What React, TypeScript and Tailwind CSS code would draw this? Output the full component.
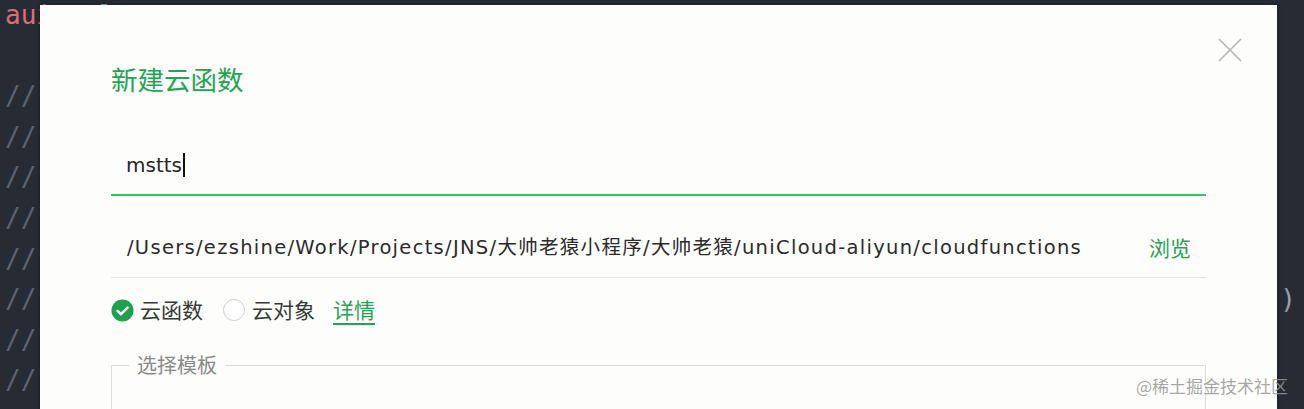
import React from "react";

const CN = "font-['Noto_Sans_CJK_SC',sans-serif]";
const MIX = "font-['DejaVu_Sans','Noto_Sans_CJK_SC',sans-serif]";

// 背景の編集器の行 (大半はダイアログの下に隠れる)
function EditorLines() {
  const lines: React.ReactNode[] = [
    <>
      <span className="text-[#e06c75]">aui</span>
      <span className="text-[#61afef]">   l</span>
    </>,
    <>&nbsp;</>,
  ];
  for (let i = 0; i < 8; i++) {
    lines.push(
      <span className="flex w-full justify-between text-[#5c6370]">
        <span>//</span>
        {i === 5 && <span className="pr-[8px] text-[#9aa0aa]">-)</span>}
      </span>
    );
  }
  return (
    <div className="mt-[-5px] pl-[5px] font-['DejaVu_Sans_Mono',monospace] text-[26px] leading-[40.6px] whitespace-pre">
      {lines.map((l, i) => (
        <div key={i} className="flex">
          {l}
        </div>
      ))}
    </div>
  );
}

function CheckedRadio() {
  return (
    <svg width="23" height="23" viewBox="0 0 24 24" className="shrink-0">
      <circle cx="12" cy="12" r="11.5" fill="#1ea04f" />
      <path
        d="M6.8 12.4l3.6 3.5 6.9-7"
        fill="none"
        stroke="#fff"
        strokeWidth="2.6"
        strokeLinecap="round"
        strokeLinejoin="round"
      />
    </svg>
  );
}

function EmptyRadio() {
  return (
    <span className="block size-[22px] shrink-0 rounded-full border-[1.5px] border-[#cfcfcf] bg-white" />
  );
}

export default function App() {
  return (
    <div className="relative h-[409px] w-[1304px] overflow-hidden bg-[#272b34]">
      <EditorLines />

      <div className="absolute top-[5px] left-[40px] h-[420px] w-[1237px] bg-[#fdfdfb] px-[71px] pt-[56px] shadow-[0_0_4px_rgba(0,0,0,0.4)]">
        <svg
          width="24"
          height="24"
          viewBox="0 0 24 24"
          className="absolute top-[33px] right-[35px]"
        >
          <path d="M1 1L23 23M23 1L1 23" stroke="#b5b5b5" strokeWidth="1.6" />
        </svg>

        <h2 className={`${CN} text-[26.5px] leading-[36px] text-[#1fa553]`}>新建云函数</h2>

        <div className={`${MIX} mt-[39px] flex h-[60px] items-center border-b-2 border-[#36c55d] pl-[15px] text-[20px] text-[#262626]`}>
          mstts
          <span className="ml-[1px] inline-block h-[24px] w-[2px] bg-[#111]" />
        </div>

        <div className="mt-[22px] flex h-[60px] items-center justify-between border-b border-[#e4e4e2] pr-[15px] pl-[16px]">
          <span className={`${MIX} text-[19.5px] tracking-[1.3px] text-[#2b2b2b]`}>
            /Users/ezshine/Work/Projects/JNS/大帅老猿小程序/大帅老猿/uniCloud-aliyun/cloudfunctions
          </span>
          <span className={`${CN} text-[21px] text-[#1fa553]`}>浏览</span>
        </div>

        <div className={`${CN} mt-[20px] flex h-[24px] items-center text-[21px] text-[#333a35]`}>
          <CheckedRadio />
          <span className="ml-[6px]">云函数</span>
          <span className="ml-[20px]">
            <EmptyRadio />
          </span>
          <span className="ml-[7px]">云对象</span>
          <span className="ml-[18px] text-[#1fa553] underline decoration-[1.5px] underline-offset-[5px]">
            详情
          </span>
        </div>

        <fieldset className="mt-[29px] h-[120px] border border-[#dcdcdc]">
          <legend className={`${CN} ml-[17px] px-[8px] text-[20px] leading-[28px] text-[#8a8a8a]`}>
            选择模板
          </legend>
        </fieldset>
      </div>

      <div className={`${CN} absolute top-[374px] right-[16px] text-[17px] leading-[24px] text-[rgba(150,150,150,0.85)]`}>
        @稀土掘金技术社区
      </div>
    </div>
  );
}
